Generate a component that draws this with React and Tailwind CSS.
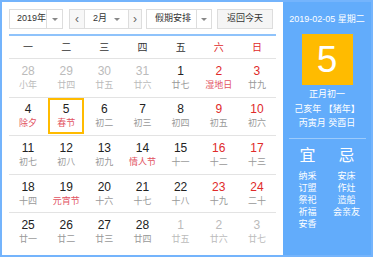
const FONT = { fontFamily: '"Liberation Sans", Arial, "Noto Sans CJK SC", sans-serif' };

const weeks = [
  [
    { d: 28, l: "小年", out: true },
    { d: 29, l: "廿四", out: true },
    { d: 30, l: "廿五", out: true },
    { d: 31, l: "廿六", out: true },
    { d: 1, l: "廿七" },
    { d: 2, l: "湿地日", red: true, fest: true },
    { d: 3, l: "廿九", red: true },
  ],
  [
    { d: 4, l: "除夕", fest: true },
    { d: 5, l: "春节", fest: true, sel: true },
    { d: 6, l: "初二" },
    { d: 7, l: "初三" },
    { d: 8, l: "初四" },
    { d: 9, l: "初五", red: true },
    { d: 10, l: "初六", red: true },
  ],
  [
    { d: 11, l: "初七" },
    { d: 12, l: "初八" },
    { d: 13, l: "初九" },
    { d: 14, l: "情人节", fest: true },
    { d: 15, l: "十一" },
    { d: 16, l: "十二", red: true },
    { d: 17, l: "十三", red: true },
  ],
  [
    { d: 18, l: "十四" },
    { d: 19, l: "元宵节", fest: true },
    { d: 20, l: "十六" },
    { d: 21, l: "十七" },
    { d: 22, l: "十八" },
    { d: 23, l: "十九", red: true },
    { d: 24, l: "二十", red: true },
  ],
  [
    { d: 25, l: "廿一" },
    { d: 26, l: "廿二" },
    { d: 27, l: "廿三" },
    { d: 28, l: "廿四" },
    { d: 1, l: "廿五", out: true },
    { d: 2, l: "廿六", out: true },
    { d: 3, l: "廿七", out: true },
  ],
];

const weekdays = ["一", "二", "三", "四", "五", "六", "日"];

const Caret = () => (
  <span className="w-0 h-0 border-l-[3px] border-r-[3px] border-t-[3px] border-l-transparent border-r-transparent border-t-[#888]" />
);

const DayCell = ({ day }) => {
  const numColor = day.out ? "text-[#bbb]" : day.red ? "text-[#e02a2a]" : "text-[#222]";
  const lunarColor = day.out
    ? "text-[#bbb]"
    : day.fest
      ? "text-[#e2525f]"
      : "text-[#999]";
  return (
    <div className="h-[37.6px] flex items-center justify-center">
      <div
        className={`w-[36px] h-[36px] flex flex-col items-center justify-center ${
          day.sel ? "border-2 border-[#ffbb00]" : ""
        }`}
      >
        <span className={`text-[12px] leading-[13px] ${numColor}`}>{day.d}</span>
        <span className={`text-[9px] leading-[11px] mt-[2px] whitespace-nowrap ${lunarColor}`}>{day.l}</span>
      </div>
    </div>
  );
};

export default function App() {
  return (
    <div style={FONT} className="w-[373px] h-[258px] bg-white">
      <div className="w-[373px] h-[257px] flex border-2 border-[#74b4fc]">
        <div className="w-[281px] pl-[7px] pr-[7px] pt-[7px] flex flex-col">
          <div className="flex items-center h-[20px] text-[9px] text-[#333] whitespace-nowrap">
            <div className="w-[54px] h-[20px] flex border border-[#ddd]">
              <span className="flex-1 flex items-center pl-[7px]">2019年</span>
              <span className="w-[16px] flex items-center justify-center border-l border-[#ddd]">
                <Caret />
              </span>
            </div>
            <div className="ml-[6px] w-[73px] h-[20px] flex border border-[#ddd]">
              <span className="w-[15px] flex items-center justify-center bg-[#f7f7f7] border-r border-[#ddd] text-[#666] text-[12px]">‹</span>
              <span className="flex-1 flex items-center justify-between pl-[8px] pr-[8px]">
                2月 <Caret />
              </span>
              <span className="w-[13px] flex items-center justify-center bg-[#f7f7f7] border-l border-[#ddd] text-[#666] text-[12px]">›</span>
            </div>
            <div className="ml-[4px] w-[66px] h-[20px] flex border border-[#ddd]">
              <span className="flex-1 flex items-center pl-[8px]">假期安排</span>
              <span className="w-[15px] flex items-center justify-center border-l border-[#ddd]">
                <Caret />
              </span>
            </div>
            <div className="ml-[5px] w-[56px] h-[20px] flex items-center justify-center border border-[#ddd] bg-[#f5f5f5]">
              返回今天
            </div>
          </div>
          <div className="mt-[5px] h-[2px] bg-[#8fc3fb]" />
          <div className="grid grid-cols-7 h-[23px] items-center text-[10px] border-b border-[#e3e3e3]">
            {weekdays.map((w, i) => (
              <span key={w} className={`text-center ${i > 4 ? "text-[#e02a2a]" : "text-[#333]"}`}>
                {w}
              </span>
            ))}
          </div>
          {weeks.map((week, wi) => (
            <div
              key={wi}
              className={`grid grid-cols-7 ${wi < weeks.length - 1 ? "border-b border-[#e3e3e3]" : ""}`}
            >
              {week.map((day, di) => (
                <DayCell key={di} day={day} />
              ))}
            </div>
          ))}
        </div>
        <div className="flex-1 bg-[#62acfb] flex flex-col items-center text-white">
          <div className="mt-[11px] text-[9px] leading-[12px] whitespace-nowrap">2019-02-05 星期二</div>
          <div className="mt-[9px] w-[51px] h-[51px] bg-[#ffbb00] flex items-center justify-center text-[37px] leading-none">
            5
          </div>
          <div className="mt-[2px] text-[9px] leading-[14.5px] flex flex-col items-center whitespace-nowrap">
            <span>正月初一</span>
            <span>己亥年 【猪年】</span>
            <span>丙寅月 癸酉日</span>
          </div>
          <div className="mt-[7px] w-[77px] h-px bg-[#9ccbfc]" />
          <div className="mt-[8px] w-full flex justify-center gap-[9px] text-[9px] leading-[12.2px] whitespace-nowrap">
            <div className="w-[30px] flex flex-col items-center">
              <span className="text-[16px] leading-[18px] mb-[5px]">宜</span>
              <span>纳采</span>
              <span>订盟</span>
              <span>祭祀</span>
              <span>祈福</span>
              <span>安香</span>
            </div>
            <div className="w-[30px] flex flex-col items-center">
              <span className="text-[16px] leading-[18px] mb-[5px]">忌</span>
              <span>安床</span>
              <span>作灶</span>
              <span>造船</span>
              <span>会亲友</span>
            </div>
          </div>
        </div>
      </div>
    </div>
  );
}
